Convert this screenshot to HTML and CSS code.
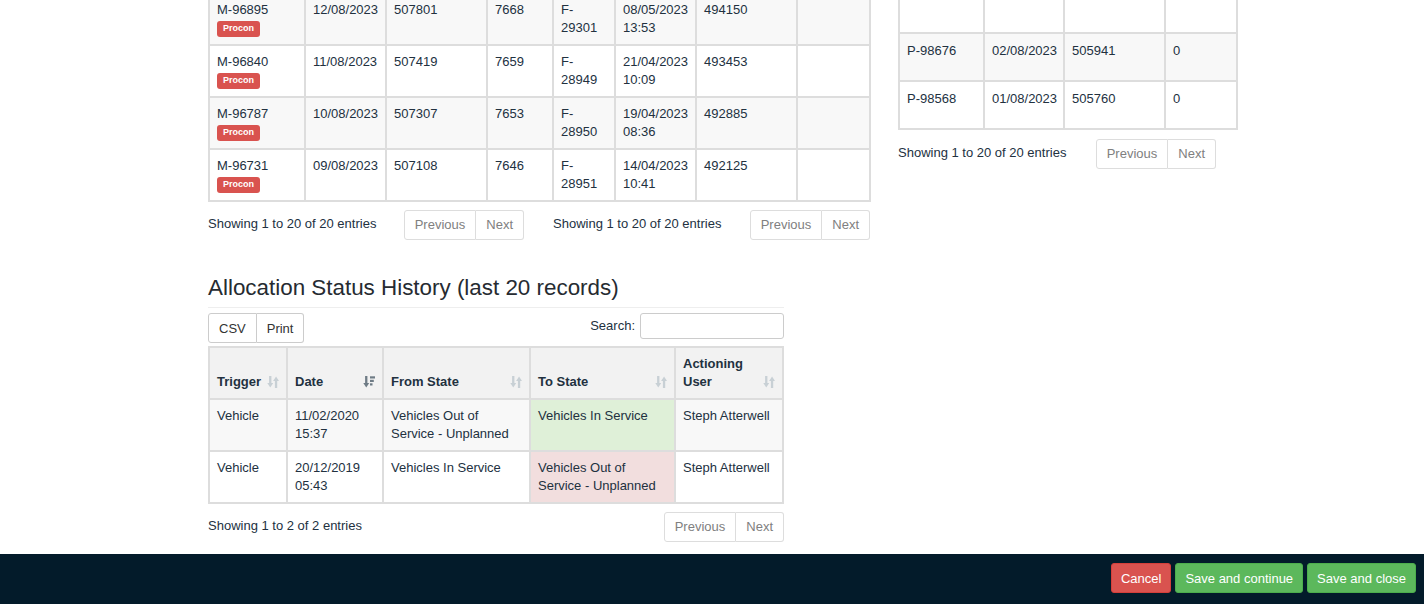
FILE: index.html
```html
<!DOCTYPE html>
<html lang="en">
<head>
    <meta charset="UTF-8">
    <meta name="viewport" content="width=device-width, initial-scale=1.0">
    <link rel="stylesheet" href="styles.css">
</head>
<body>
    <div class="page">
        <div class="top">
            <div class="col-left">
                <table class="grid grid-main">
                    <tbody>
                        <tr class="alt">
                            <td>M-96895<span class="label">Procon</span></td>
                            <td>12/08/2023</td>
                            <td>507801</td>
                            <td>7668</td>
                            <td>F-29301</td>
                            <td>08/05/2023 13:53</td>
                            <td>494150</td>
                            <td></td>
                        </tr>
                        <tr>
                            <td>M-96840<span class="label">Procon</span></td>
                            <td>11/08/2023</td>
                            <td>507419</td>
                            <td>7659</td>
                            <td>F-28949</td>
                            <td>21/04/2023 10:09</td>
                            <td>493453</td>
                            <td></td>
                        </tr>
                        <tr class="alt">
                            <td>M-96787<span class="label">Procon</span></td>
                            <td>10/08/2023</td>
                            <td>507307</td>
                            <td>7653</td>
                            <td>F-28950</td>
                            <td>19/04/2023 08:36</td>
                            <td>492885</td>
                            <td></td>
                        </tr>
                        <tr>
                            <td>M-96731<span class="label">Procon</span></td>
                            <td>09/08/2023</td>
                            <td>507108</td>
                            <td>7646</td>
                            <td>F-28951</td>
                            <td>14/04/2023 10:41</td>
                            <td>492125</td>
                            <td></td>
                        </tr>
                    </tbody>
                </table>
                <div class="dt-foot-split">
                    <div class="dt-foot">
                        <div class="dt-info">Showing 1 to 20 of 20 entries</div>
                        <div class="pager"><span class="page-btn">Previous</span><span class="page-btn">Next</span></div>
                    </div>
                    <div class="dt-foot">
                        <div class="dt-info">Showing 1 to 20 of 20 entries</div>
                        <div class="pager"><span class="page-btn">Previous</span><span class="page-btn">Next</span></div>
                    </div>
                </div>
            </div>

            <div class="col-right">
                <table class="grid grid-side">
                    <tbody>
                        <tr>
                            <td>&nbsp;</td>
                            <td>&nbsp;</td>
                            <td>&nbsp;</td>
                            <td>&nbsp;</td>
                        </tr>
                        <tr class="alt">
                            <td>P-98676</td>
                            <td>02/08/2023</td>
                            <td>505941</td>
                            <td>0</td>
                        </tr>
                        <tr>
                            <td>P-98568</td>
                            <td>01/08/2023</td>
                            <td>505760</td>
                            <td>0</td>
                        </tr>
                    </tbody>
                </table>
                <div class="dt-foot side-foot">
                    <div class="dt-info">Showing 1 to 20 of 20 entries</div>
                    <div class="pager"><span class="page-btn">Previous</span><span class="page-btn">Next</span></div>
                </div>
            </div>
        </div>

        <section class="history">
            <h3>Allocation Status History (last 20 records)</h3>
            <div class="dt-toolbar">
                <div class="btn-group">
                    <button class="btn">CSV</button><button class="btn">Print</button>
                </div>
                <label class="search">Search: <input type="search"></label>
            </div>
            <table class="grid grid-history">
                <thead>
                    <tr>
                        <th><div class="th-in"><span>Trigger</span>
                            <svg class="sort" viewBox="0 0 12 12"><rect x="2.1" y="0" width="2.3" height="8"/><polygon points="0.3,7 6.2,7 3.25,11.6"/><rect x="7.9" y="4" width="2.3" height="8"/><polygon points="6.1,5 12,5 9.05,0.4"/></svg></div></th>
                        <th><div class="th-in"><span>Date</span>
                            <svg class="sort active" viewBox="0 0 12 12"><rect x="2.1" y="0" width="2.3" height="8"/><polygon points="0.3,7 6.2,7 3.25,11.6"/><rect x="7" y="0.3" width="5" height="2.2"/><rect x="7" y="3.8" width="3.8" height="2.2"/><rect x="7" y="7.3" width="2.5" height="2.2"/></svg></div></th>
                        <th><div class="th-in"><span>From State</span>
                            <svg class="sort" viewBox="0 0 12 12"><rect x="2.1" y="0" width="2.3" height="8"/><polygon points="0.3,7 6.2,7 3.25,11.6"/><rect x="7.9" y="4" width="2.3" height="8"/><polygon points="6.1,5 12,5 9.05,0.4"/></svg></div></th>
                        <th><div class="th-in"><span>To State</span>
                            <svg class="sort" viewBox="0 0 12 12"><rect x="2.1" y="0" width="2.3" height="8"/><polygon points="0.3,7 6.2,7 3.25,11.6"/><rect x="7.9" y="4" width="2.3" height="8"/><polygon points="6.1,5 12,5 9.05,0.4"/></svg></div></th>
                        <th><div class="th-in"><span>Actioning User</span>
                            <svg class="sort" viewBox="0 0 12 12"><rect x="2.1" y="0" width="2.3" height="8"/><polygon points="0.3,7 6.2,7 3.25,11.6"/><rect x="7.9" y="4" width="2.3" height="8"/><polygon points="6.1,5 12,5 9.05,0.4"/></svg></div></th>
                    </tr>
                </thead>
                <tbody>
                    <tr class="alt">
                        <td>Vehicle</td>
                        <td>11/02/2020 15:37</td>
                        <td>Vehicles Out of Service - Unplanned</td>
                        <td class="state-ok">Vehicles In Service</td>
                        <td>Steph Atterwell</td>
                    </tr>
                    <tr>
                        <td>Vehicle</td>
                        <td>20/12/2019 05:43</td>
                        <td>Vehicles In Service</td>
                        <td class="state-bad">Vehicles Out of Service - Unplanned</td>
                        <td>Steph Atterwell</td>
                    </tr>
                </tbody>
            </table>
            <div class="dt-foot history-foot">
                <div class="dt-info">Showing 1 to 2 of 2 entries</div>
                <div class="pager"><span class="page-btn">Previous</span><span class="page-btn">Next</span></div>
            </div>
        </section>
    </div>

    <footer class="actions">
        <button class="act act-cancel">Cancel</button>
        <button class="act act-save">Save and continue</button>
        <button class="act act-save">Save and close</button>
    </footer>
</body>
</html>
```

FILE: styles.css
```css
* {
    box-sizing: border-box;
}

body {
    margin: 0;
    background: #fff;
    color: #22313f;
    font-family: "Liberation Sans", Arial, sans-serif;
    font-size: 13px;
    line-height: 18px;
    overflow: hidden;
}

.page {
    padding-left: 208px;
}

/* top area - the page is scrolled, so tables start above the fold */
.top {
    display: flex;
    align-items: flex-start;
    gap: 27px;
}

.col-left {
    width: 663px;
    margin-top: -8px;
}

.col-right {
    width: 340px;
    margin-top: -16px;
}

/* tables */
.grid {
    border-collapse: separate;
    border-spacing: 0;
    table-layout: fixed;
    border-top: 2px solid #ddd;
    border-left: 2px solid #ddd;
}

.grid td,
.grid th {
    border-right: 2px solid #ddd;
    border-bottom: 2px solid #ddd;
    padding: 7px 4px 7px 7px;
    vertical-align: top;
    text-align: left;
}

.grid tr.alt td {
    background: #f8f8f8;
}

.grid-main {
    width: 663px;
}

.grid-main td:nth-child(1) { width: 96px; }
.grid-main td:nth-child(2) { width: 81px; }
.grid-main td:nth-child(3) { width: 101px; }
.grid-main td:nth-child(4) { width: 66px; }
.grid-main td:nth-child(5) { width: 62px; padding-right: 8px; }
.grid-main td:nth-child(6) { width: 81px; }
.grid-main td:nth-child(7) { width: 101px; }
.grid-main td:nth-child(8) { width: 73px; }

.grid-main td {
    height: 52px;
}

.label {
    display: block;
    width: fit-content;
    margin-top: 2px;
    padding: 3px 6px 4px;
    background: #d9534f;
    color: #fff;
    font-size: 9px;
    font-weight: bold;
    line-height: 9px;
    border-radius: 3px;
}

.grid-side {
    width: 340px;
}

.grid-side td {
    padding: 8px 4px 20px 7px;
}

.grid-side td:nth-child(1) { width: 85px; }
.grid-side td:nth-child(2) { width: 80px; }
.grid-side td:nth-child(3) { width: 101px; }
.grid-side td:nth-child(4) { width: 72px; }

/* datatables footer: info + pager */
.dt-foot {
    display: flex;
    justify-content: space-between;
    align-items: flex-start;
}

.dt-info {
    padding-top: 5px;
}

.dt-foot-split {
    display: grid;
    grid-template-columns: 316px 317px;
    column-gap: 29px;
    margin-top: 8px;
}

.side-foot {
    width: 318px;
    margin-top: 9px;
}

.pager {
    display: flex;
}

.page-btn {
    height: 30px;
    line-height: 28px;
    padding: 0 10px;
    border: 1px solid #ddd;
    color: #808080;
    background: #fff;
}

.page-btn:first-child {
    border-radius: 3px 0 0 3px;
}

.page-btn + .page-btn {
    border-left: 0;
    border-radius: 0 3px 3px 0;
}

/* history section */
.history {
    width: 576px;
    margin-top: 36px;
}

.history h3 {
    margin: 0;
    font-size: 22.4px;
    line-height: 24px;
    font-weight: normal;
    color: #262b31;
}

.dt-toolbar {
    display: flex;
    justify-content: space-between;
    align-items: flex-start;
    margin-top: 7px;
    padding-top: 5px;
    border-top: 1px solid #eee;
}

.btn-group {
    display: flex;
}

.btn {
    height: 30px;
    padding: 0 10px;
    margin: 0;
    font-family: inherit;
    font-size: 13px;
    color: #333;
    background: #fff;
    border: 1px solid #ccc;
}

.btn:first-child {
    border-radius: 3px 0 0 3px;
}

.btn + .btn {
    border-left: 0;
    border-radius: 0 3px 3px 0;
}

.search {
    display: flex;
    align-items: center;
    gap: 5px;
}

.search input {
    width: 144px;
    height: 26px;
    margin: 0;
    border: 1px solid #ccc;
    border-radius: 3px;
}

.grid-history {
    width: 576px;
    margin-top: 3px;
}

.grid-history th {
    background: #f2f2f2;
    vertical-align: bottom;
    font-weight: bold;
    padding-right: 7px;
}

.grid-history th:nth-child(1) { width: 78px; }
.grid-history th:nth-child(2) { width: 96px; }
.grid-history th:nth-child(3) { width: 147px; }
.grid-history th:nth-child(4) { width: 145px; }
.grid-history th:nth-child(5) { width: 108px; }

.th-in {
    display: flex;
    justify-content: space-between;
    align-items: flex-end;
    gap: 4px;
}

.sort {
    flex: none;
    width: 12px;
    height: 12px;
    margin-bottom: 3px;
    fill: #c8d0d5;
}

.sort.active {
    fill: #6f7c86;
}

.grid-history tr td.state-ok {
    background: #dff0d8;
}

.grid-history tr td.state-bad {
    background: #f2dede;
}

.history-foot {
    margin-top: 8px;
}

/* fixed action bar */
.actions {
    position: fixed;
    left: 0;
    right: 0;
    bottom: 0;
    height: 50px;
    display: flex;
    justify-content: flex-end;
    align-items: flex-start;
    gap: 4px;
    padding: 9px 8px 0 0;
    background: #031b2a;
}

.act {
    height: 30px;
    padding: 0 9px;
    margin: 0;
    font-family: inherit;
    font-size: 13px;
    color: #fff;
    border: 1px solid;
    border-radius: 3px;
}

.act-cancel {
    background: #d9534f;
    border-color: #d43f3a;
}

.act-save {
    background: #5cb85c;
    border-color: #4cae4c;
}
```
